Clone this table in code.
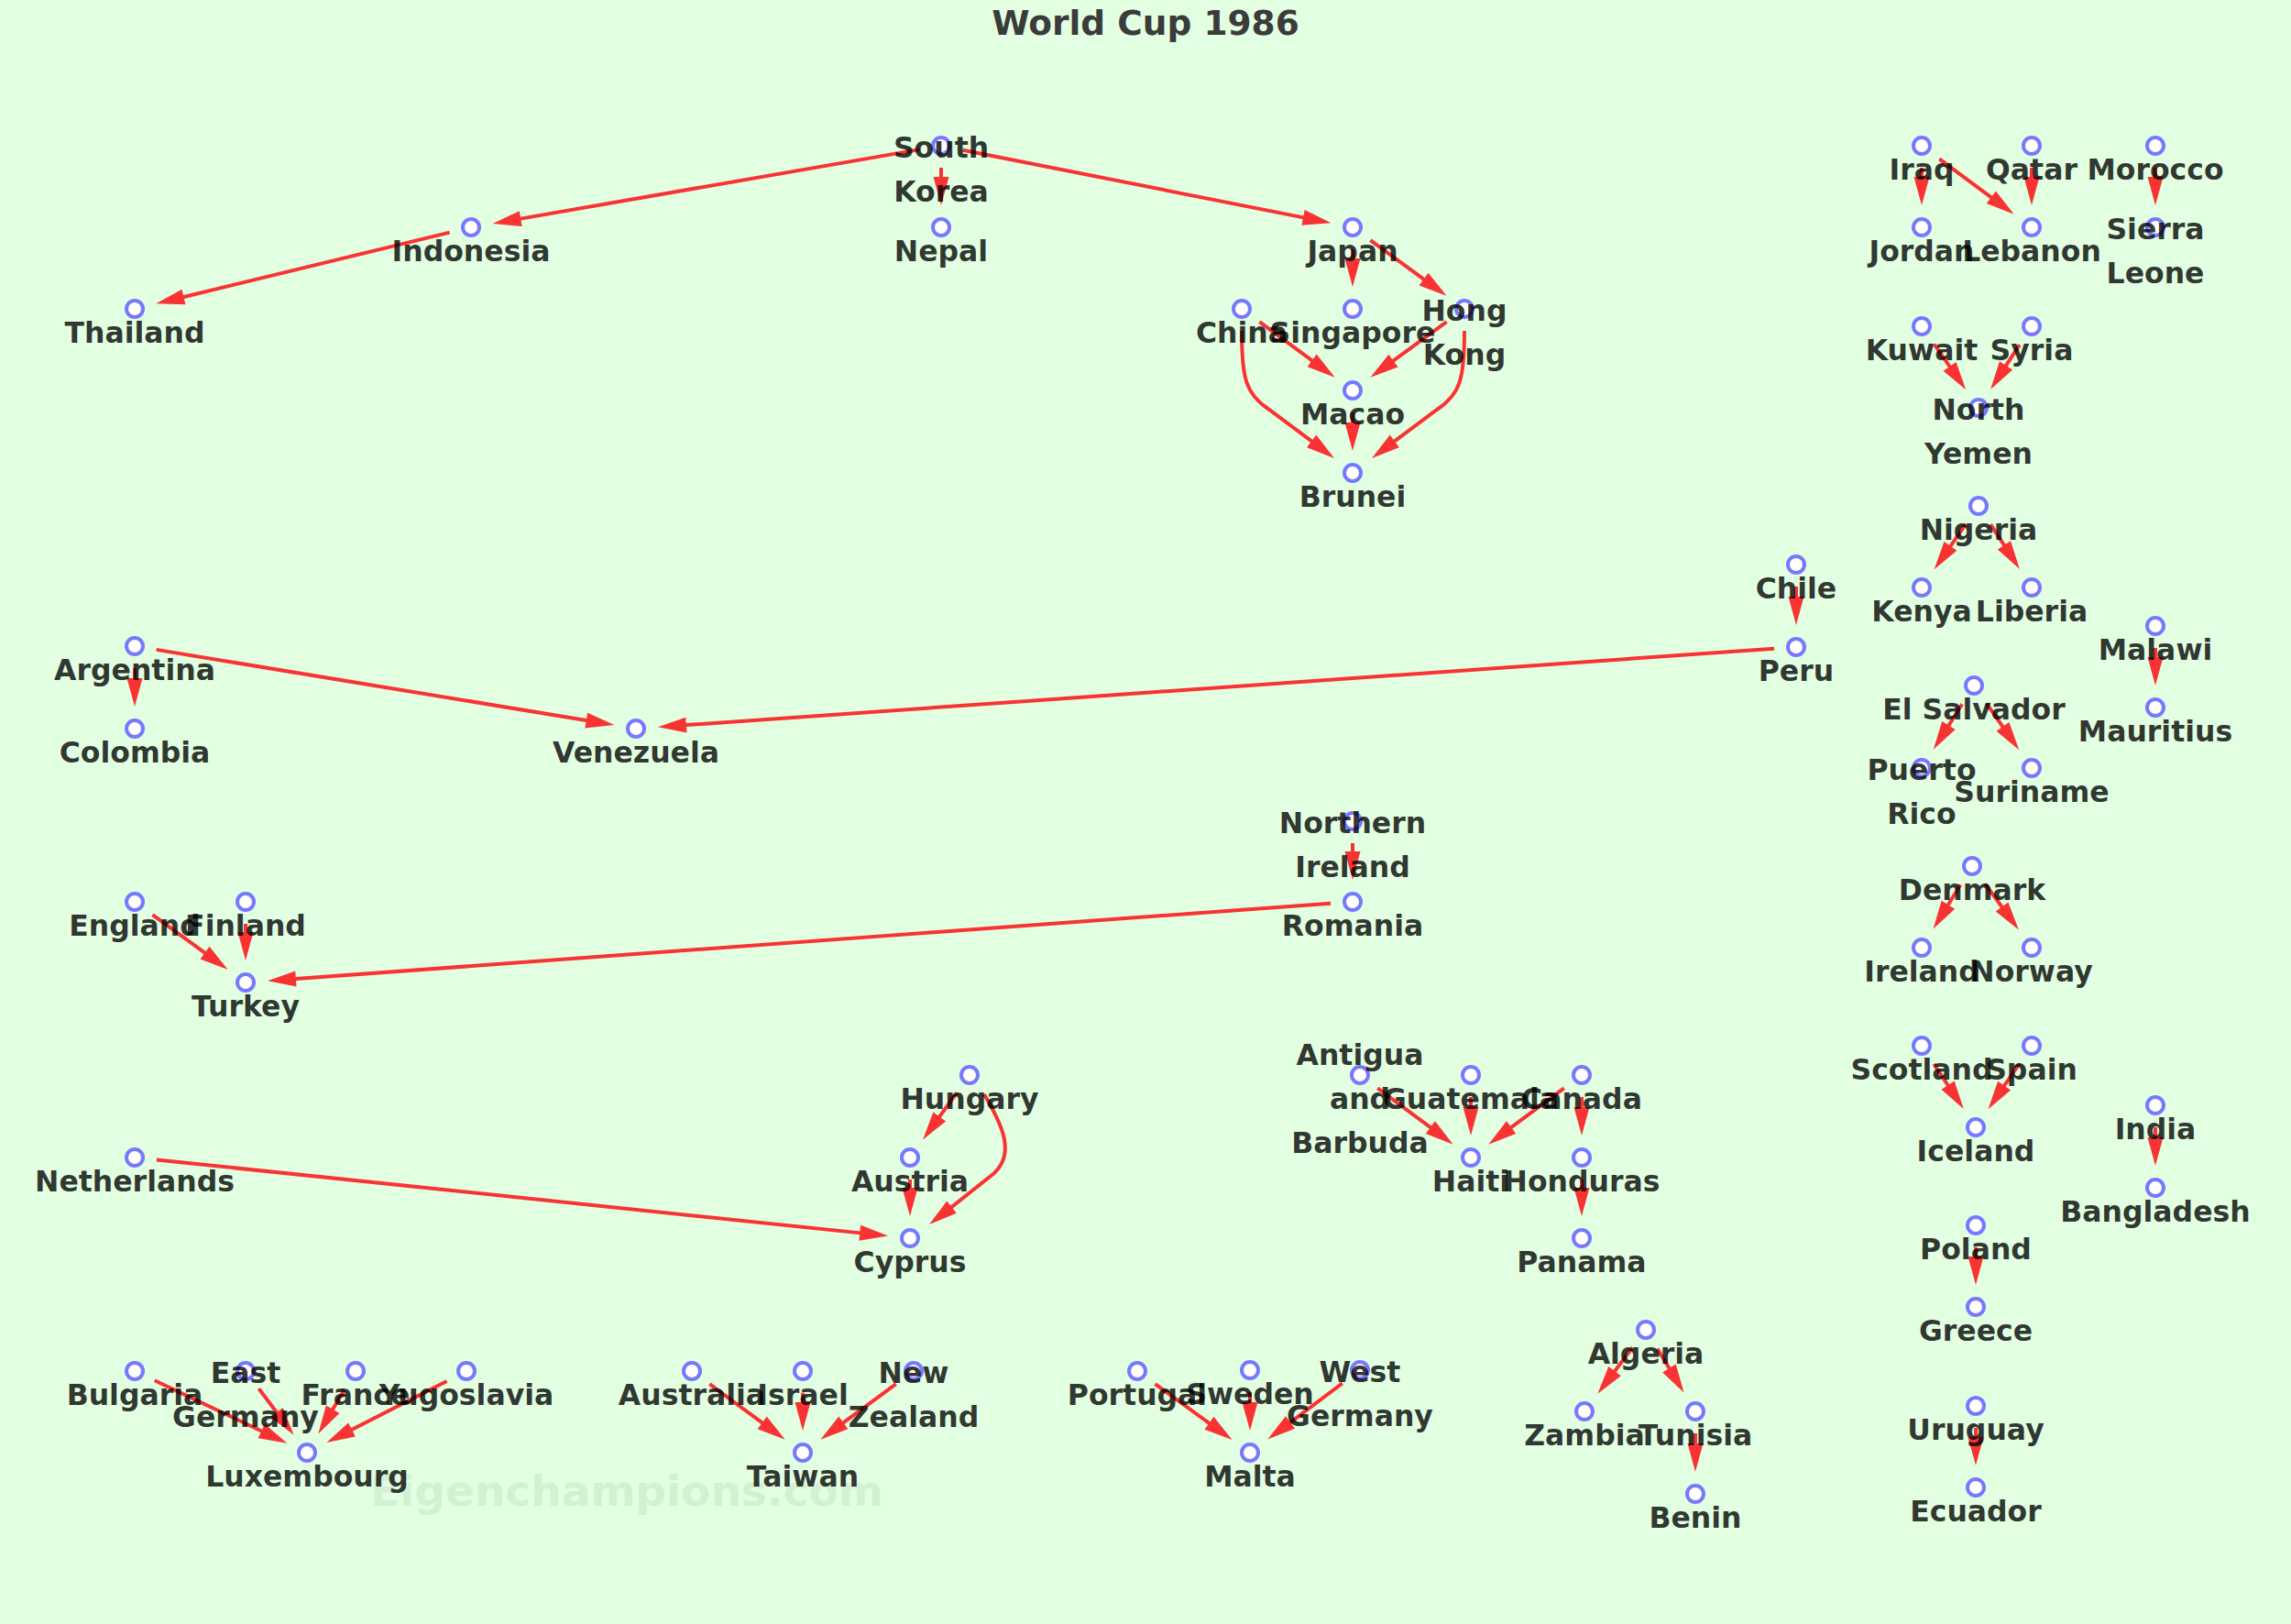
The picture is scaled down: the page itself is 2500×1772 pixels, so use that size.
type GraphNode = { lines: string[]; x: number; y: number };

const RED = "#f93333";

const nodes: Record<string, GraphNode> = {
  sk: { lines: ["South", "Korea"], x: 1027, y: 159 },
  nepal: { lines: ["Nepal"], x: 1027, y: 248 },
  indonesia: { lines: ["Indonesia"], x: 514, y: 248 },
  thailand: { lines: ["Thailand"], x: 147, y: 337 },
  japan: { lines: ["Japan"], x: 1476, y: 248 },
  singapore: { lines: ["Singapore"], x: 1476, y: 337 },
  china: { lines: ["China"], x: 1355, y: 337 },
  hk: { lines: ["Hong", "Kong"], x: 1598, y: 337 },
  macao: { lines: ["Macao"], x: 1476, y: 426 },
  brunei: { lines: ["Brunei"], x: 1476, y: 516 },
  iraq: { lines: ["Iraq"], x: 2097, y: 159 },
  qatar: { lines: ["Qatar"], x: 2217, y: 159 },
  morocco: { lines: ["Morocco"], x: 2352, y: 159 },
  jordan: { lines: ["Jordan"], x: 2097, y: 248 },
  lebanon: { lines: ["Lebanon"], x: 2217, y: 248 },
  sierra: { lines: ["Sierra", "Leone"], x: 2352, y: 248 },
  kuwait: { lines: ["Kuwait"], x: 2097, y: 356 },
  syria: { lines: ["Syria"], x: 2217, y: 356 },
  nyemen: { lines: ["North", "Yemen"], x: 2159, y: 445 },
  nigeria: { lines: ["Nigeria"], x: 2159, y: 552 },
  kenya: { lines: ["Kenya"], x: 2097, y: 641 },
  liberia: { lines: ["Liberia"], x: 2217, y: 641 },
  chile: { lines: ["Chile"], x: 1960, y: 616 },
  peru: { lines: ["Peru"], x: 1960, y: 706 },
  malawi: { lines: ["Malawi"], x: 2352, y: 683 },
  mauritius: { lines: ["Mauritius"], x: 2352, y: 772 },
  elsalvador: { lines: ["El Salvador"], x: 2154, y: 748 },
  puertorico: { lines: ["Puerto", "Rico"], x: 2097, y: 838 },
  suriname: { lines: ["Suriname"], x: 2217, y: 838 },
  argentina: { lines: ["Argentina"], x: 147, y: 705 },
  colombia: { lines: ["Colombia"], x: 147, y: 795 },
  venezuela: { lines: ["Venezuela"], x: 694, y: 795 },
  nireland: { lines: ["Northern", "Ireland"], x: 1476, y: 896 },
  romania: { lines: ["Romania"], x: 1476, y: 984 },
  england: { lines: ["England"], x: 147, y: 984 },
  finland: { lines: ["Finland"], x: 268, y: 984 },
  turkey: { lines: ["Turkey"], x: 268, y: 1072 },
  denmark: { lines: ["Denmark"], x: 2152, y: 945 },
  ireland: { lines: ["Ireland"], x: 2097, y: 1034 },
  norway: { lines: ["Norway"], x: 2217, y: 1034 },
  hungary: { lines: ["Hungary"], x: 1058, y: 1173 },
  austria: { lines: ["Austria"], x: 993, y: 1263 },
  cyprus: { lines: ["Cyprus"], x: 993, y: 1351 },
  netherlands: { lines: ["Netherlands"], x: 147, y: 1263 },
  antigua: { lines: ["Antigua", "and", "Barbuda"], x: 1484, y: 1173 },
  guatemala: { lines: ["Guatemala"], x: 1605, y: 1173 },
  canada: { lines: ["Canada"], x: 1726, y: 1173 },
  haiti: { lines: ["Haiti"], x: 1605, y: 1263 },
  honduras: { lines: ["Honduras"], x: 1726, y: 1263 },
  panama: { lines: ["Panama"], x: 1726, y: 1351 },
  scotland: { lines: ["Scotland"], x: 2097, y: 1141 },
  spain: { lines: ["Spain"], x: 2217, y: 1141 },
  iceland: { lines: ["Iceland"], x: 2156, y: 1230 },
  india: { lines: ["India"], x: 2352, y: 1206 },
  bangladesh: { lines: ["Bangladesh"], x: 2352, y: 1296 },
  poland: { lines: ["Poland"], x: 2156, y: 1337 },
  greece: { lines: ["Greece"], x: 2156, y: 1426 },
  algeria: { lines: ["Algeria"], x: 1796, y: 1451 },
  zambia: { lines: ["Zambia"], x: 1729, y: 1540 },
  tunisia: { lines: ["Tunisia"], x: 1850, y: 1540 },
  benin: { lines: ["Benin"], x: 1850, y: 1630 },
  uruguay: { lines: ["Uruguay"], x: 2156, y: 1534 },
  ecuador: { lines: ["Ecuador"], x: 2156, y: 1623 },
  bulgaria: { lines: ["Bulgaria"], x: 147, y: 1496 },
  egermany: { lines: ["East", "Germany"], x: 268, y: 1496 },
  france: { lines: ["France"], x: 388, y: 1496 },
  yugoslavia: { lines: ["Yugoslavia"], x: 509, y: 1496 },
  luxembourg: { lines: ["Luxembourg"], x: 335, y: 1585 },
  australia: { lines: ["Australia"], x: 755, y: 1496 },
  israel: { lines: ["Israel"], x: 876, y: 1496 },
  nzealand: { lines: ["New", "Zealand"], x: 997, y: 1496 },
  taiwan: { lines: ["Taiwan"], x: 876, y: 1585 },
  portugal: { lines: ["Portugal"], x: 1241, y: 1496 },
  sweden: { lines: ["Sweden"], x: 1364, y: 1495 },
  wgermany: { lines: ["West", "Germany"], x: 1484, y: 1495 },
  malta: { lines: ["Malta"], x: 1364, y: 1585 },
};

const edges: [string, string][] = [
  ["sk", "indonesia"], ["sk", "nepal"], ["sk", "japan"], ["indonesia", "thailand"],
  ["japan", "singapore"], ["japan", "hk"], ["china", "macao"], ["hk", "macao"], ["macao", "brunei"],
  ["iraq", "jordan"], ["iraq", "lebanon"], ["qatar", "lebanon"], ["morocco", "sierra"],
  ["kuwait", "nyemen"], ["syria", "nyemen"], ["nigeria", "kenya"], ["nigeria", "liberia"],
  ["chile", "peru"], ["malawi", "mauritius"], ["elsalvador", "puertorico"], ["elsalvador", "suriname"],
  ["argentina", "colombia"], ["argentina", "venezuela"], ["peru", "venezuela"],
  ["nireland", "romania"], ["romania", "turkey"], ["england", "turkey"], ["finland", "turkey"],
  ["denmark", "ireland"], ["denmark", "norway"],
  ["hungary", "austria"], ["austria", "cyprus"], ["netherlands", "cyprus"],
  ["antigua", "haiti"], ["guatemala", "haiti"], ["canada", "haiti"], ["canada", "honduras"], ["honduras", "panama"],
  ["scotland", "iceland"], ["spain", "iceland"], ["india", "bangladesh"], ["poland", "greece"], ["uruguay", "ecuador"],
  ["bulgaria", "luxembourg"], ["egermany", "luxembourg"], ["france", "luxembourg"], ["yugoslavia", "luxembourg"],
  ["australia", "taiwan"], ["israel", "taiwan"], ["nzealand", "taiwan"],
  ["portugal", "malta"], ["sweden", "malta"], ["wgermany", "malta"],
  ["algeria", "zambia"], ["algeria", "tunisia"], ["tunisia", "benin"],
];

// curved edges: path up to the bend, then a straight run into the arrow tip
const curves = [
  { d: "M1355,361 C1355,412 1359,430 1385,447", tip: [1456, 500], dir: [0.8, 0.6] },
  { d: "M1598,361 C1598,412 1594,430 1568,447", tip: [1497, 500], dir: [-0.8, 0.6] },
  { d: "M1074,1194 C1094,1228 1108,1258 1085,1280", tip: [1014, 1336], dir: [-0.79, 0.61] },
];

const HEAD_LEN = 31;
const HEAD_W = 8.5;

function headPoints(tx: number, ty: number, dx: number, dy: number) {
  const bx = tx - HEAD_LEN * dx;
  const by = ty - HEAD_LEN * dy;
  return `${tx},${ty} ${bx - HEAD_W * dy},${by + HEAD_W * dx} ${bx + HEAD_W * dy},${by - HEAD_W * dx}`;
}

function Arrow({ from, to }: { from: GraphNode; to: GraphNode }) {
  const vx = to.x - from.x;
  const vy = to.y - from.y;
  const len = Math.hypot(vx, vy);
  const dx = vx / len;
  const dy = vy / len;
  const sx = from.x + 24 * dx;
  const sy = from.y + 24 * dy;
  const tx = to.x - 24 * dx;
  const ty = to.y - 24 * dy;
  return (
    <g>
      <line x1={sx} y1={sy} x2={tx - (HEAD_LEN - 3) * dx} y2={ty - (HEAD_LEN - 3) * dy} stroke={RED} strokeWidth={4} />
      <polygon points={headPoints(tx, ty, dx, dy)} fill={RED} />
    </g>
  );
}

export default function App() {
  return (
    <div className="w-[2500px] h-[1772px] bg-[#e2ffe2] overflow-hidden">
      <svg width={2500} height={1772} viewBox="0 0 2500 1772" className="block" style={{ fontFamily: '"DejaVu Sans", Verdana, sans-serif' }}>
        <text x={1250} y={38} textAnchor="middle" fontSize={37.5} fontWeight="bold" fill="#3b3b3b">
          World Cup 1986
        </text>
        <text x={684} y={1643} textAnchor="middle" fontSize={47} fontWeight="bold" fill="#d3f0d3">
          Eigenchampions.com
        </text>

        {edges.map(([a, b]) => (
          <Arrow key={a + b} from={nodes[a]} to={nodes[b]} />
        ))}
        {curves.map((c, i) => {
          const [tx, ty] = c.tip;
          const [dx, dy] = c.dir;
          const bx = tx - (HEAD_LEN - 3) * dx;
          const by = ty - (HEAD_LEN - 3) * dy;
          return (
            <g key={i}>
              <path d={`${c.d} L${bx},${by}`} fill="none" stroke={RED} strokeWidth={4} />
              <polygon points={headPoints(tx, ty, dx, dy)} fill={RED} />
            </g>
          );
        })}

        {Object.entries(nodes).map(([id, n]) => (
          <circle key={id} cx={n.x} cy={n.y} r={9} fill="#ffffff" stroke="#7878ff" strokeWidth={4} />
        ))}

        {Object.entries(nodes).map(([id, n]) => (
          <text key={id} textAnchor="middle" fontSize={31.5} fontWeight="bold" fill="#000000" fillOpacity={0.8}>
            {n.lines.map((line, i) => (
              <tspan key={i} x={n.x} y={n.y + 37 + (i - (n.lines.length - 1) / 2) * 48}>
                {line}
              </tspan>
            ))}
          </text>
        ))}
      </svg>
    </div>
  );
}
